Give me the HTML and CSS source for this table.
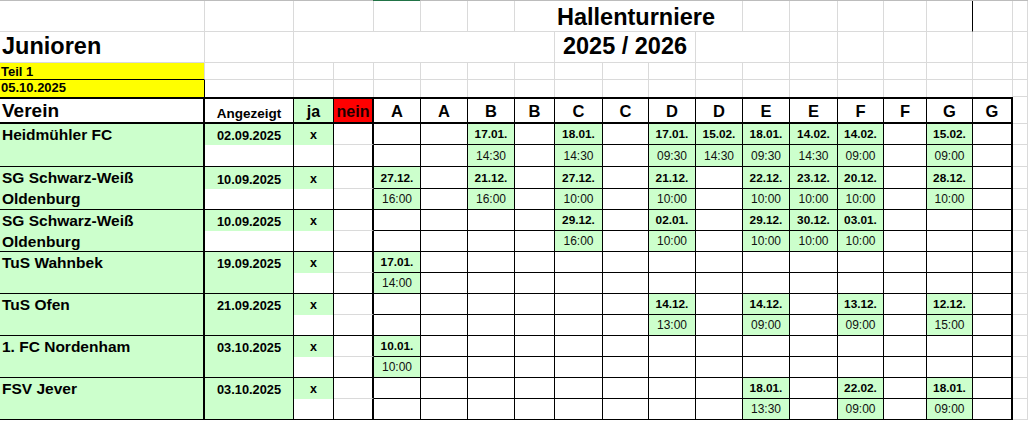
FILE: index.html
```html
<!DOCTYPE html>
<html lang="de">
<head>
<meta charset="utf-8">
<title>Hallenturniere 2025 / 2026</title>
<link rel="stylesheet" href="styles.css">
</head>
<body>
<div class="topline"><div class="tl-gray"></div><div class="tl-sel"></div><div class="tl-rest"></div></div>
<div class="sheet">
  <!-- row 0 -->
  <div class="g"></div><div class="g"></div><div class="g span2"></div><div class="g"></div><div class="g"></div><div class="g"></div>
  <div class="g span5 title">Hallenturniere</div>
  <div class="g"></div><div class="g"></div><div class="g"></div><div class="g"></div><div class="g bk"></div><div class="g"></div><div class="g"></div>
  <!-- row 1 -->
  <div class="g big left">Junioren</div><div class="g"></div><div class="g span6"></div>
  <div class="g span3 big">2025 / 2026</div>
  <div class="g span2"></div><div class="g"></div><div class="g"></div><div class="g"></div><div class="g"></div><div class="g"></div><div class="g"></div>
  <!-- row 2 -->
  <div class="teil">Teil 1</div>
  <div class="g"></div><div class="g"></div><div class="g"></div><div class="g"></div><div class="g"></div><div class="g"></div><div class="g"></div><div class="g"></div><div class="g"></div>
  <div class="g"></div><div class="g"></div><div class="g"></div><div class="g"></div><div class="g"></div><div class="g"></div><div class="g"></div><div class="g"></div><div class="g"></div>
  <!-- row 3 -->
  <div class="stand">05.10.2025</div>
  <div class="g0"></div><div class="g0"></div><div class="g0"></div><div class="g0"></div><div class="g0"></div><div class="g0"></div><div class="g0"></div><div class="g0"></div><div class="g0"></div>
  <div class="g0"></div><div class="g0"></div><div class="g0"></div><div class="g0"></div><div class="g0"></div><div class="g0"></div><div class="g0"></div><div class="g0"></div><div class="g"></div>
  <!-- header -->
  <div class="h h-verein">Verein</div>
  <div class="h h-ang">Angezeigt</div>
  <div class="h h-ja">ja</div>
  <div class="h h-nein">nein</div>
  <div class="h">A</div><div class="h">A</div><div class="h">B</div><div class="h">B</div><div class="h">C</div><div class="h">C</div><div class="h">D</div>
  <div class="h">D</div><div class="h">E</div><div class="h">E</div><div class="h">F</div><div class="h">F</div><div class="h">G</div><div class="h end">G</div>
  <div class="g"></div>

  <!-- Heidmühler FC -->
  <div class="club">Heidmühler FC</div>
  <div class="ang on">02.09.2025</div><div class="ja on">x</div><div class="nein"></div>
  <div class="d"></div><div class="d"></div><div class="d on">17.01.</div><div class="d"></div><div class="d on">18.01.</div><div class="d"></div><div class="d on">17.01.</div>
  <div class="d on">15.02.</div><div class="d on">18.01.</div><div class="d on">14.02.</div><div class="d on">14.02.</div><div class="d"></div><div class="d on">15.02.</div><div class="d end"></div>
  <div class="g"></div>
  <div class="ang2"></div><div class="ja2"></div><div class="nein2"></div>
  <div class="t"></div><div class="t"></div><div class="t on">14:30</div><div class="t"></div><div class="t on">14:30</div><div class="t"></div><div class="t on">09:30</div>
  <div class="t on">14:30</div><div class="t on">09:30</div><div class="t on">14:30</div><div class="t on">09:00</div><div class="t"></div><div class="t on">09:00</div><div class="t end"></div>
  <div class="g"></div>

  <!-- SG Schwarz-Weiß Oldenburg -->
  <div class="club">SG Schwarz-Weiß<br>Oldenburg</div>
  <div class="ang on">10.09.2025</div><div class="ja on">x</div><div class="nein"></div>
  <div class="d on">27.12.</div><div class="d"></div><div class="d on">21.12.</div><div class="d"></div><div class="d on">27.12.</div><div class="d"></div><div class="d on">21.12.</div>
  <div class="d"></div><div class="d on">22.12.</div><div class="d on">23.12.</div><div class="d on">20.12.</div><div class="d"></div><div class="d on">28.12.</div><div class="d end"></div>
  <div class="g"></div>
  <div class="ang2"></div><div class="ja2"></div><div class="nein2"></div>
  <div class="t on">16:00</div><div class="t"></div><div class="t on">16:00</div><div class="t"></div><div class="t on">10:00</div><div class="t"></div><div class="t on">10:00</div>
  <div class="t"></div><div class="t on">10:00</div><div class="t on">10:00</div><div class="t on">10:00</div><div class="t"></div><div class="t on">10:00</div><div class="t end"></div>
  <div class="g"></div>

  <!-- SG Schwarz-Weiß Oldenburg (2) -->
  <div class="club">SG Schwarz-Weiß<br>Oldenburg</div>
  <div class="ang on">10.09.2025</div><div class="ja on">x</div><div class="nein"></div>
  <div class="d"></div><div class="d"></div><div class="d"></div><div class="d"></div><div class="d on">29.12.</div><div class="d"></div><div class="d on">02.01.</div>
  <div class="d"></div><div class="d on">29.12.</div><div class="d on">30.12.</div><div class="d on">03.01.</div><div class="d"></div><div class="d"></div><div class="d end"></div>
  <div class="g"></div>
  <div class="ang2"></div><div class="ja2"></div><div class="nein2"></div>
  <div class="t"></div><div class="t"></div><div class="t"></div><div class="t"></div><div class="t on">16:00</div><div class="t"></div><div class="t on">10:00</div>
  <div class="t"></div><div class="t on">10:00</div><div class="t on">10:00</div><div class="t on">10:00</div><div class="t"></div><div class="t"></div><div class="t end"></div>
  <div class="g"></div>

  <!-- TuS Wahnbek -->
  <div class="club">TuS Wahnbek</div>
  <div class="ang on">19.09.2025</div><div class="ja on">x</div><div class="nein"></div>
  <div class="d on">17.01.</div><div class="d"></div><div class="d"></div><div class="d"></div><div class="d"></div><div class="d"></div><div class="d"></div>
  <div class="d"></div><div class="d"></div><div class="d"></div><div class="d"></div><div class="d"></div><div class="d"></div><div class="d end"></div>
  <div class="g"></div>
  <div class="ang2 on"></div><div class="ja2"></div><div class="nein2"></div>
  <div class="t on">14:00</div><div class="t"></div><div class="t"></div><div class="t"></div><div class="t"></div><div class="t"></div><div class="t"></div>
  <div class="t"></div><div class="t"></div><div class="t"></div><div class="t"></div><div class="t"></div><div class="t"></div><div class="t end"></div>
  <div class="g"></div>

  <!-- TuS Ofen -->
  <div class="club">TuS Ofen</div>
  <div class="ang on">21.09.2025</div><div class="ja on">x</div><div class="nein"></div>
  <div class="d"></div><div class="d"></div><div class="d"></div><div class="d"></div><div class="d"></div><div class="d"></div><div class="d on">14.12.</div>
  <div class="d"></div><div class="d on">14.12.</div><div class="d"></div><div class="d on">13.12.</div><div class="d"></div><div class="d on">12.12.</div><div class="d end"></div>
  <div class="g"></div>
  <div class="ang2 on"></div><div class="ja2"></div><div class="nein2"></div>
  <div class="t"></div><div class="t"></div><div class="t"></div><div class="t"></div><div class="t"></div><div class="t"></div><div class="t on">13:00</div>
  <div class="t"></div><div class="t on">09:00</div><div class="t"></div><div class="t on">09:00</div><div class="t"></div><div class="t on">15:00</div><div class="t end"></div>
  <div class="g"></div>

  <!-- 1. FC Nordenham -->
  <div class="club">1. FC Nordenham</div>
  <div class="ang on">03.10.2025</div><div class="ja on">x</div><div class="nein"></div>
  <div class="d on">10.01.</div><div class="d"></div><div class="d"></div><div class="d"></div><div class="d"></div><div class="d"></div><div class="d"></div>
  <div class="d"></div><div class="d"></div><div class="d"></div><div class="d"></div><div class="d"></div><div class="d"></div><div class="d end"></div>
  <div class="g"></div>
  <div class="ang2 on"></div><div class="ja2"></div><div class="nein2"></div>
  <div class="t on">10:00</div><div class="t"></div><div class="t"></div><div class="t"></div><div class="t"></div><div class="t"></div><div class="t"></div>
  <div class="t"></div><div class="t"></div><div class="t"></div><div class="t"></div><div class="t"></div><div class="t"></div><div class="t end"></div>
  <div class="g"></div>

  <!-- FSV Jever -->
  <div class="club">FSV Jever</div>
  <div class="ang on">03.10.2025</div><div class="ja on">x</div><div class="nein"></div>
  <div class="d"></div><div class="d"></div><div class="d"></div><div class="d"></div><div class="d"></div><div class="d"></div><div class="d"></div>
  <div class="d"></div><div class="d on">18.01.</div><div class="d"></div><div class="d on">22.02.</div><div class="d"></div><div class="d on">18.01.</div><div class="d end"></div>
  <div class="g"></div>
  <div class="ang2 on"></div><div class="ja2"></div><div class="nein2"></div>
  <div class="t"></div><div class="t"></div><div class="t"></div><div class="t"></div><div class="t"></div><div class="t"></div><div class="t"></div>
  <div class="t"></div><div class="t on">13:30</div><div class="t"></div><div class="t on">09:00</div><div class="t"></div><div class="t on">09:00</div><div class="t end"></div>
  <div class="g"></div>
</div>
</body>
</html>
```

FILE: styles.css
```css
:root {
  --gl: #dadada;
  --green: #ccffcc;
  --yellow: #ffff00;
  --red: #ff0000;
}

html, body {
  margin: 0;
  padding: 0;
  background: #fff;
  color: #000;
  font-family: "Liberation Sans", Arial, sans-serif;
  overflow: hidden;
}

.topline {
  display: flex;
  height: 1px;
}
.tl-gray { width: 373px; background: #bcbcbc; }
.tl-sel { width: 47px; background: #217346; }
.tl-rest { flex: 1; background: #bcbcbc; }

.sheet {
  display: grid;
  grid-template-columns: 205px 89px 40px 40px 47px 47px 47px 40px 48px 46px 47px 47px 47px 48px 46px 43px 46px 40px 1fr;
  grid-template-rows: 31px 31px 17px 17px 27px 21px 22px 22px repeat(11, 21px);
}

.sheet > div {
  box-sizing: border-box;
  display: flex;
  align-items: center;
  justify-content: center;
  white-space: nowrap;
  min-width: 0;
  font-weight: bold;
}

/* plain grid cells */
.g {
  border-right: 1px solid var(--gl);
  border-bottom: 1px solid var(--gl);
}
.g0 {
  border-right: 1px solid var(--gl);
}
.bk { border-right-color: #000 !important; }
.span2 { grid-column: span 2; }
.span3 { grid-column: span 3; }
.span5 { grid-column: span 5; }
.span6 { grid-column: span 6; }

.sheet > .title {
  justify-content: flex-start;
  align-items: flex-end;
  padding-left: 42px;
  font-size: 23.5px;
}
.sheet > .big {
  align-items: flex-end;
  padding-bottom: 2px;
  font-size: 23.5px;
}
.sheet > .left {
  justify-content: flex-start;
  padding-left: 2px;
}

.sheet > .teil {
  background: var(--yellow);
  border-right: 1px solid var(--gl);
  border-bottom: 1px solid #000;
  justify-content: flex-start;
  align-items: flex-end;
  padding-left: 1px;
  font-size: 13px;
}
.sheet > .stand {
  background: var(--yellow);
  border-right: 1px solid #000;
  justify-content: flex-start;
  align-items: flex-end;
  padding-left: 1px;
  padding-bottom: 2px;
  font-size: 13px;
}

/* header row */
.sheet > .h {
  border-top: 2px solid #000;
  border-bottom: 2px solid #000;
  border-right: 1px solid #000;
  align-items: flex-end;
  padding-bottom: 1px;
  font-size: 16.5px;
}
.sheet > .h-verein {
  justify-content: flex-start;
  padding-left: 2px;
  padding-bottom: 0;
  font-size: 19px;
  border-right-width: 2px;
}
.sheet > .h-ang {
  font-size: 13.5px;
  padding-bottom: 1.5px;
}
.sheet > .h-ja {
  background: var(--green);
  font-size: 16px;
}
.sheet > .h-nein {
  background: var(--red);
  font-size: 16px;
  border-right-width: 2px;
  color: #1a0000;
}

/* data rows */
.sheet > .club {
  display: block;
  grid-row: span 2;
  background: var(--green);
  border-right: 2px solid #000;
  border-bottom: 1px solid #000;
  padding-left: 2px;
  font-size: 15.5px;
  line-height: 21px;
  white-space: nowrap;
}
.sheet > .ang {
  border-right: 1px solid #000;
  font-size: 12.8px;
  padding-top: 2px;
}
.sheet > .ang2 {
  border-right: 1px solid #000;
  border-bottom: 1px solid #000;
}
.sheet > .ja {
  border-right: 1px solid #000;
  font-size: 12.5px;
  padding-top: 1px;
}
.sheet > .ja2 {
  border-right: 1px solid #000;
  border-bottom: 1px solid #000;
}
.sheet > .nein {
  border-right: 2px solid #000;
  border-bottom: 1px solid var(--gl);
}
.sheet > .nein2 {
  border-right: 2px solid #000;
  border-bottom: 1px solid #000;
}
.sheet > .d,
.sheet > .t {
  border-right: 1px solid #000;
  border-bottom: 1px solid #000;
}
.sheet > .d {
  font-size: 11.8px;
}
.sheet > .t {
  font-size: 12px;
  font-weight: normal;
  color: #111;
}
.sheet > .end {
  border-right-width: 2px;
}
.on {
  background: var(--green);
}
```
